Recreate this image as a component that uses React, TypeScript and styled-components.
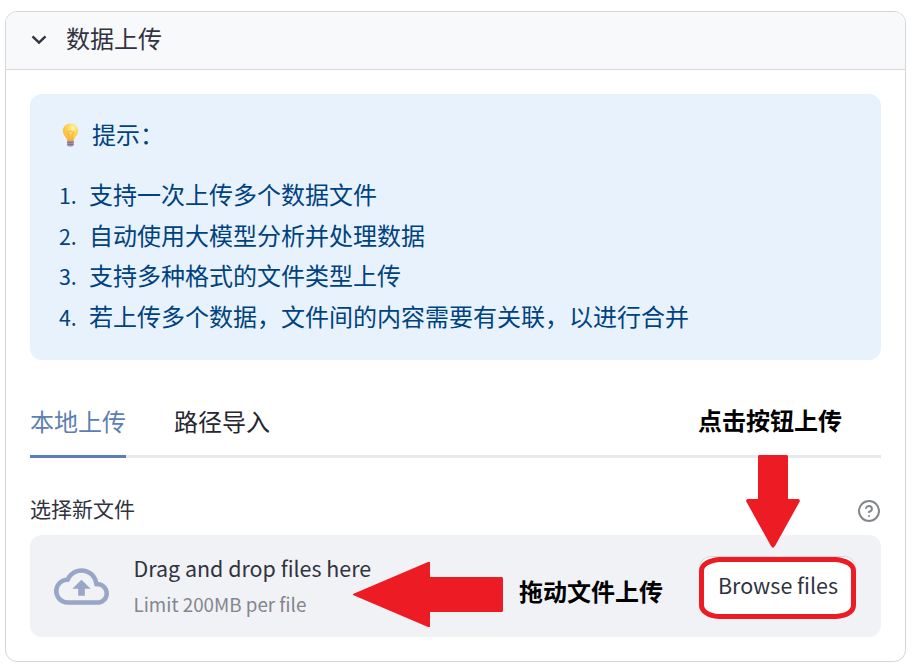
import React from 'react';
import styled, { createGlobalStyle } from 'styled-components';

const GlobalStyle = createGlobalStyle`
  * { box-sizing: border-box; }
  body { margin: 0; background: #fff; }
`;

const Page = styled.main`
  position: relative;
  width: 913px;
  height: 664px;
  padding: 11px 7px 2px 5px;
  overflow: hidden;
  color: #31333f;
  font-family: 'Noto Sans CJK SC', sans-serif;
  font-size: 24px;
`;

const Panel = styled.section`
  height: 651px;
  border: 1px solid #d5d6d9;
  border-radius: 12px;
  overflow: hidden;
`;

const PanelHeader = styled.header`
  display: flex;
  align-items: center;
  height: 58px;
  padding: 0 24px 3px;
  gap: 18px;
  border-bottom: 1px solid #d5d6d9;
  background: #f8f9fb;
`;

const PanelTitle = styled.h1`
  margin: 0 0 2px;
  font-size: 24px;
  font-weight: 400;
  line-height: 36px;
`;

const PanelBody = styled.div`
  padding: 24px 24px 0;
`;

const Notice = styled.div`
  height: 266px;
  padding: 23px 29px;
  border-radius: 12px;
  background: #e8f2fc;
  color: #004280;
`;

const NoticeTitle = styled.div`
  display: flex;
  align-items: center;
  gap: 9px;
  height: 36px;
`;

const NoticeText = styled.span`
  line-height: 36px;
  margin-bottom: 2px;
`;

const TipList = styled.ol`
  margin: 21px 0 0;
  padding: 0;
  list-style: none;
  counter-reset: tip;
`;

const Tip = styled.li`
  display: flex;
  align-items: baseline;
  height: 40.7px;
  line-height: 40.7px;
  white-space: nowrap;
  counter-increment: tip;

  &::before {
    content: counter(tip) '.';
    width: 30px;
    font-size: 21.3px;
  }
`;

const Tabs = styled.nav`
  display: flex;
  gap: 48px;
  height: 64px;
  margin-top: 34px;
  border-bottom: 3px solid #e9e9eb;
`;

const Tab = styled.button<{ $active?: boolean }>`
  height: 64px;
  padding: 0 0 8px;
  border: 0;
  border-bottom: 3px solid ${(p) => (p.$active ? '#5b80b2' : 'transparent')};
  background: none;
  color: ${(p) => (p.$active ? '#5b80b2' : '#262730')};
  font: inherit;
`;

const FieldHeader = styled.div`
  display: flex;
  align-items: center;
  justify-content: space-between;
  height: 36px;
  margin-top: 35px;
  margin-bottom: 6px;
  font-size: 21px;
`;

const FieldLabel = styled.label`
  line-height: 30px;
  margin-top: -6px;
`;

const Dropzone = styled.div`
  display: flex;
  align-items: center;
  height: 102px;
  padding: 0 25px 0 24px;
  border-radius: 12px;
  background: #f0f2f6;
`;

const DropText = styled.div`
  display: flex;
  flex-direction: column;
  flex: 1;
  margin: 0 0 2px 24.5px;
`;

const DropTitle = styled.span`
  font-size: 21.45px;
  line-height: 38px;
`;

const DropLimit = styled.span`
  color: #84868e;
  font-size: 18.8px;
  line-height: 34px;
`;

const BrowseButton = styled.button`
  width: 157px;
  height: 61px;
  padding: 0 0 3px 1px;
  border: 1px solid #d5d6d9;
  border-radius: 12px;
  background: #fff;
  color: #31333f;
  font-family: inherit;
  font-size: 21.5px;
  white-space: nowrap;
`;

const Note = styled.strong<{ $x: number; $y: number }>`
  position: absolute;
  left: ${(p) => p.$x}px;
  top: ${(p) => p.$y}px;
  color: #000;
  font-weight: 700;
  line-height: 36px;
  white-space: nowrap;
`;

const MarkLayer = styled.svg`
  position: absolute;
  inset: 0;
  pointer-events: none;
`;

const ChevronIcon = () => (
  <svg width="18" height="18" viewBox="0 0 18 18" fill="none" stroke="#31333f" strokeWidth="2.4">
    <path d="M2.5 6.3 9 12.5l6.5-6.2" />
  </svg>
);

const BulbIcon = () => (
  <svg width="24" height="28" viewBox="0 0 24 28">
    <defs>
      <radialGradient id="bulb" cx="0.65" cy="0.25" r="0.75">
        <stop offset="0" stopColor="#fff6b0" />
        <stop offset="0.4" stopColor="#ffd95c" />
        <stop offset="1" stopColor="#fbb537" />
      </radialGradient>
    </defs>
    <path d="M11.5 2.5c-4.4 0-7.6 3.3-7.6 7.3 0 4.8 3.9 6 4.5 11h6c.6-5 4.7-6.2 4.7-11 0-4-3.2-7.3-7.6-7.3z" fill="url(#bulb)" />
    <path d="M10 20v-6.5c-3-1.4-1.6-3.7 0-2.6 1-1.1 2.2-1.1 3 0 1.6-1.1 3 1.2 0 2.6V20" fill="none" stroke="#f3a531" strokeWidth="0.9" />
    <path d="M8.2 19.8h6.5v4.4l-1.5 1.2H9.7l-1.5-1.2z" fill="#a391b4" />
    <path d="M8.2 21.6l6.5-.6M8.2 23.8l6.5-.6" stroke="#756589" strokeWidth="0.8" />
  </svg>
);

const HelpIcon = () => (
  <svg width="24" height="24" viewBox="0 0 24 24" fill="none" stroke="#84868e" strokeWidth="2" strokeLinecap="round" strokeLinejoin="round">
    <circle cx="12" cy="12" r="10" />
    <path d="M9.09 9a3 3 0 0 1 5.83 1c0 2-3 3-3 3M12 17h.01" />
  </svg>
);

const CloudIcon = () => (
  <svg width="55" height="55" viewBox="0 0 24 24" fill="#98a7c8">
    <path d="M19.35 10.04A7.49 7.49 0 0 0 12 4C9.11 4 6.6 5.64 5.35 8.04A5.994 5.994 0 0 0 0 14c0 3.31 2.69 6 6 6h13c2.76 0 5-2.24 5-5 0-2.64-2.05-4.78-4.65-4.96zM19 18H6c-2.21 0-4-1.79-4-4 0-2.05 1.53-3.76 3.56-3.97l1.07-.11.5-.95A5.469 5.469 0 0 1 12 6c2.62 0 4.88 1.86 5.39 4.43l.3 1.5 1.53.11A2.98 2.98 0 0 1 22 15c0 1.65-1.35 3-3 3zM8 13h2.55v3h2.9v-3H16l-4-4z" />
  </svg>
);

const tips = [
  '支持一次上传多个数据文件',
  '自动使用大模型分析并处理数据',
  '支持多种格式的文件类型上传',
  '若上传多个数据，文件间的内容需要有关联，以进行合并',
];

export default function App() {
  return (
    <Page lang="zh-CN">
      <GlobalStyle />
      <Panel>
        <PanelHeader>
          <ChevronIcon />
          <PanelTitle>数据上传</PanelTitle>
        </PanelHeader>
        <PanelBody>
          <Notice>
            <NoticeTitle>
              <BulbIcon />
              <NoticeText>提示：</NoticeText>
            </NoticeTitle>
            <TipList>
              {tips.map((tip) => (
                <Tip key={tip}>{tip}</Tip>
              ))}
            </TipList>
          </Notice>
          <Tabs>
            <Tab $active>本地上传</Tab>
            <Tab>路径导入</Tab>
          </Tabs>
          <FieldHeader>
            <FieldLabel>选择新文件</FieldLabel>
            <HelpIcon />
          </FieldHeader>
          <Dropzone>
            <CloudIcon />
            <DropText>
              <DropTitle>Drag and drop files here</DropTitle>
              <DropLimit>Limit 200MB per file</DropLimit>
            </DropText>
            <BrowseButton>Browse files</BrowseButton>
          </Dropzone>
        </PanelBody>
      </Panel>
      <Note $x={698} $y={402}>点击按钮上传</Note>
      <Note $x={519} $y={573}>拖动文件上传</Note>
      <MarkLayer width="913" height="664" viewBox="0 0 913 664">
        <g fill="#ed1c24">
          <path d="M759 455h28l1 1v43h11l1 2-25 45-2 2-2-2-25-45 1-2h11v-43z" />
          <path d="M353 594l75-32h2v15h72l1 1v33l-1 1h-72v15h-2l-75-32z" />
        </g>
        <path d="M719 559.5H836C846 560.5 853.5 564.5 853.5 571V605C853.5 612 846 616 836 616.5H719C708 616 701.5 611 701.5 605V571C701.5 564.5 709 560.5 719 559.5z" fill="none" stroke="#ed1c24" strokeWidth="5" />
      </MarkLayer>
    </Page>
  );
}
